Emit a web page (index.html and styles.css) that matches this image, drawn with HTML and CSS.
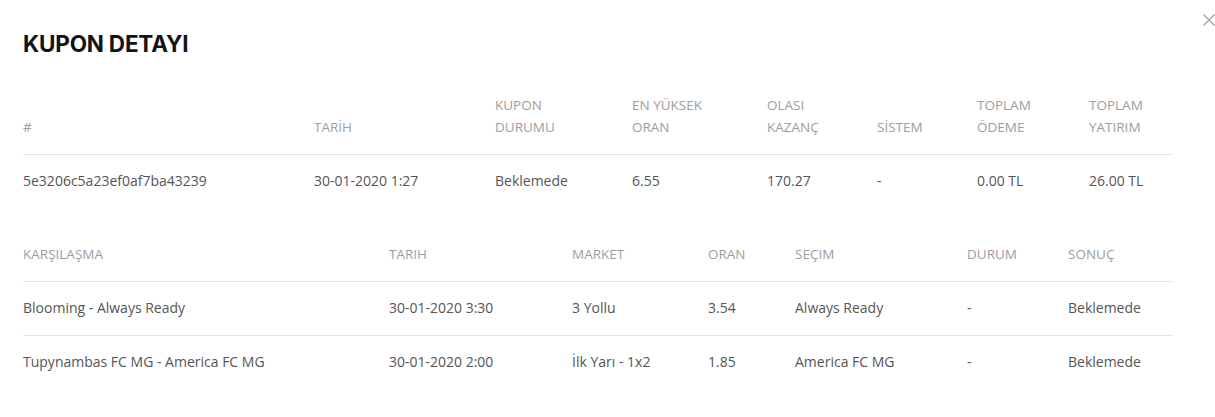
FILE: index.html
```html
<!DOCTYPE html>
<html lang="tr">
<head>
<meta charset="utf-8">
<title>Kupon Detayı</title>
<link rel="stylesheet" href="styles.css">
</head>
<body>
<div class="modal">
  <button class="close" aria-label="Kapat">
    <svg width="12" height="12" viewBox="0 0 12 12"><path d="M0.5 0.5L11.5 11.5M11.5 0.5L0.5 11.5" stroke="#9a9a9a" stroke-width="1.1" fill="none"/></svg>
  </button>
  <h1 class="title">KUPON DETAYI</h1>

  <table class="grid grid-summary">
    <colgroup>
      <col class="c291"><col class="c181"><col class="c137"><col class="c135"><col class="c110"><col class="c100"><col class="c112"><col>
    </colgroup>
    <thead>
      <tr>
        <th>#</th>
        <th>TARİH</th>
        <th>KUPON<br>DURUMU</th>
        <th>EN YÜKSEK<br>ORAN</th>
        <th>OLASI<br>KAZANÇ</th>
        <th>SİSTEM</th>
        <th>TOPLAM<br>ÖDEME</th>
        <th>TOPLAM<br>YATIRIM</th>
      </tr>
    </thead>
    <tbody>
      <tr>
        <td>5e3206c5a23ef0af7ba43239</td>
        <td>30-01-2020 1:27</td>
        <td>Beklemede</td>
        <td>6.55</td>
        <td>170.27</td>
        <td>-</td>
        <td>0.00 TL</td>
        <td>26.00 TL</td>
      </tr>
    </tbody>
  </table>

  <table class="grid grid-events">
    <colgroup>
      <col class="c366"><col class="c183"><col class="c136"><col class="c87"><col class="c172"><col class="c101"><col>
    </colgroup>
    <thead>
      <tr>
        <th>KARŞILAŞMA</th>
        <th>TARIH</th>
        <th>MARKET</th>
        <th>ORAN</th>
        <th>SEÇIM</th>
        <th>DURUM</th>
        <th>SONUÇ</th>
      </tr>
    </thead>
    <tbody>
      <tr>
        <td>Blooming - Always Ready</td>
        <td>30-01-2020 3:30</td>
        <td>3 Yollu</td>
        <td>3.54</td>
        <td>Always Ready</td>
        <td>-</td>
        <td>Beklemede</td>
      </tr>
      <tr>
        <td>Tupynambas FC MG - America FC MG</td>
        <td>30-01-2020 2:00</td>
        <td>İlk Yarı - 1x2</td>
        <td>1.85</td>
        <td>America FC MG</td>
        <td>-</td>
        <td>Beklemede</td>
      </tr>
    </tbody>
  </table>
</div>
</body>
</html>
```
FILE: styles.css
```css
html, body {
  margin: 0;
  padding: 0;
  background: #ffffff;
}
body {
  font-family: "Open Sans", "Liberation Sans", sans-serif;
  color: #555555;
}
.modal {
  position: relative;
  padding: 30px 42px 20px 23px;
}
.close {
  position: absolute;
  top: 14px;
  right: 0;
  width: 12px;
  height: 12px;
  padding: 0;
  border: 0;
  background: none;
  display: block;
}
.close svg { display: block; }
.title {
  margin: 0;
  font-family: "Inter", "Liberation Sans", sans-serif;
  font-weight: 700;
  font-size: 22.5px;
  line-height: 28px;
  color: #141414;
  letter-spacing: -0.2px;
}
.grid {
  width: 1150px;
  border-collapse: collapse;
  table-layout: fixed;
}
.grid-summary { margin-top: 20px; }
.grid-events { margin-top: 19px; }
.grid th {
  text-align: left;
  font-weight: 400;
  font-size: 13.5px;
  color: #9d9d9d;
  line-height: 22px;
  padding: 16px 0 16px;
  vertical-align: bottom;
  border-bottom: 1px solid #e4e4e4;
}
.grid td {
  font-size: 14px;
  line-height: 22px;
  padding: 15px 0 16px;
  color: #555555;
  white-space: nowrap;
}
.grid-events tbody tr:first-child td {
  border-bottom: 1px solid #e4e4e4;
}
.c291 { width: 291px; }
.c181 { width: 181px; }
.c137 { width: 137px; }
.c135 { width: 135px; }
.c110 { width: 110px; }
.c100 { width: 100px; }
.c112 { width: 112px; }
.c366 { width: 366px; }
.c183 { width: 183px; }
.c136 { width: 136px; }
.c87 { width: 87px; }
.c172 { width: 172px; }
.c101 { width: 101px; }
```
